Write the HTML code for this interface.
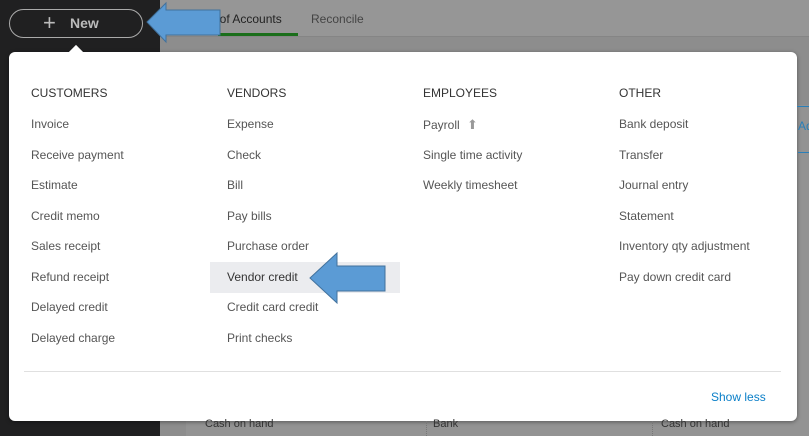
<!DOCTYPE html><html><head><style>
body{margin:0;width:809px;height:436px;overflow:hidden;position:relative;background:#8d8d8d;font-family:"Liberation Sans",sans-serif}
.a{position:absolute}
.it{position:absolute;font-size:12px;color:#555;white-space:nowrap}
.h{position:absolute;font-size:12px;color:#333;white-space:nowrap}
</style></head><body>
<div class="a" style="left:0;top:0;width:160px;height:436px;background:#202021"></div>
<div class="a" style="left:160px;top:0;width:649px;height:36px;background:#969696;border-bottom:1px solid #858585"></div>
<div class="a" style="left:186px;top:105px;width:623px;height:331px;background:#939393"></div>
<div class="a" style="left:187px;top:12px;font-size:12px;color:#222">Chart of Accounts</div>
<div class="a" style="left:218px;top:33px;width:80px;height:3px;background:#1a6e1a"></div>
<div class="a" style="left:311px;top:12px;font-size:12px;color:#444">Reconcile</div>
<div class="a" style="left:9px;top:9px;width:134px;height:29px;border:1.5px solid #aaa;border-radius:15px;box-sizing:border-box"></div>
<div class="a" style="left:43px;top:10px;font-size:22px;color:#bbb;font-weight:300">+</div>
<div class="a" style="left:70px;top:15px;font-size:14px;color:#bbb;font-weight:bold">New</div>
<div class="a" style="left:9px;top:52px;width:788px;height:369px;background:#fff;border-radius:6px;box-shadow:0 1px 4px rgba(0,0,0,.4)"></div>
<div class="a" style="left:71px;top:47px;width:10px;height:10px;background:#fff;transform:rotate(45deg)"></div>
<div class="a" style="left:210px;top:262px;width:190px;height:31px;background:#ebecef"></div>
<div class="h" style="left:31px;top:86px">CUSTOMERS</div>
<div class="h" style="left:227px;top:86px">VENDORS</div>
<div class="h" style="left:423px;top:86px">EMPLOYEES</div>
<div class="h" style="left:619px;top:86px">OTHER</div>
<div class="it" style="left:31px;top:117px">Invoice</div>
<div class="it" style="left:31px;top:148px">Receive payment</div>
<div class="it" style="left:31px;top:178px">Estimate</div>
<div class="it" style="left:31px;top:209px">Credit memo</div>
<div class="it" style="left:31px;top:239px">Sales receipt</div>
<div class="it" style="left:31px;top:270px">Refund receipt</div>
<div class="it" style="left:31px;top:300px">Delayed credit</div>
<div class="it" style="left:31px;top:331px">Delayed charge</div>
<div class="it" style="left:227px;top:117px">Expense</div>
<div class="it" style="left:227px;top:148px">Check</div>
<div class="it" style="left:227px;top:178px">Bill</div>
<div class="it" style="left:227px;top:209px">Pay bills</div>
<div class="it" style="left:227px;top:239px">Purchase order</div>
<div class="it" style="left:227px;top:270px;color:#333">Vendor credit</div>
<div class="it" style="left:227px;top:300px">Credit card credit</div>
<div class="it" style="left:227px;top:331px">Print checks</div>
<div class="it" style="left:423px;top:117px">Payroll <span style="color:#999;font-size:13px;margin-left:4px">&#x2B06;</span></div>
<div class="it" style="left:423px;top:148px">Single time activity</div>
<div class="it" style="left:423px;top:178px">Weekly timesheet</div>
<div class="it" style="left:619px;top:117px">Bank deposit</div>
<div class="it" style="left:619px;top:148px">Transfer</div>
<div class="it" style="left:619px;top:178px">Journal entry</div>
<div class="it" style="left:619px;top:209px">Statement</div>
<div class="it" style="left:619px;top:239px">Inventory qty adjustment</div>
<div class="it" style="left:619px;top:270px">Pay down credit card</div>
<div class="a" style="left:24px;top:371px;width:757px;height:1px;background:#e0e0e0"></div>
<div class="a" style="left:711px;top:390px;font-size:12px;color:#0a7fc8">Show less</div>
<div class="a" style="left:797px;top:106px;width:12px;height:1px;background:#2a7fb8"></div>
<div class="a" style="left:798px;top:119px;font-size:12px;color:#2a7fb8">Ad</div>
<div class="a" style="left:798px;top:152px;width:11px;height:1px;background:#2a7fb8"></div>
<div class="a" style="left:205px;top:418px;font-size:11px;color:#333">Cash on hand</div>
<div class="a" style="left:433px;top:418px;font-size:11px;color:#333">Bank</div>
<div class="a" style="left:661px;top:418px;font-size:11px;color:#333">Cash on hand</div>
<div class="a" style="left:426px;top:421px;width:1px;height:15px;border-left:1px dotted #777"></div>
<div class="a" style="left:652px;top:421px;width:1px;height:15px;border-left:1px dotted #777"></div>
<svg class="a" style="left:0;top:0" width="809" height="436">
<polygon points="147,22 166,3 166,10 220,10 220,35 166,35 166,42" fill="#5b9bd5" stroke="#41719c" stroke-width="1"/>
<polygon points="310,278 337,253 337,266 385,266 385,291 337,291 337,303" fill="#5b9bd5" stroke="#41719c" stroke-width="1"/>
</svg>
</body></html>
